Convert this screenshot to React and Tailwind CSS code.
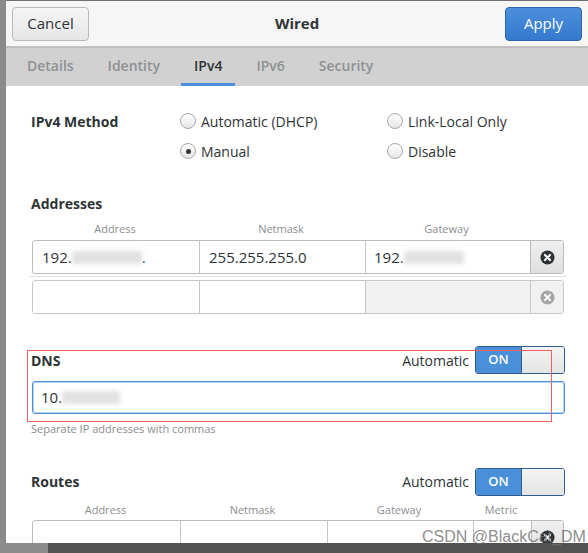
const font = { fontFamily: '"Open Sans", "DejaVu Sans", sans-serif' };

function XCircle({ dim }) {
  return (
    <svg width="15" height="15" viewBox="0 0 16 16">
      <circle cx="8" cy="8" r="7.5" fill={dim ? "#a4a6a7" : "#2e3436"} />
      <path d="M5.3 5.3 L10.7 10.7 M10.7 5.3 L5.3 10.7" stroke="#fff" strokeWidth="2.2" strokeLinecap="round" />
    </svg>
  );
}

function Radio({ checked, label }) {
  return (
    <div className="flex items-center gap-[5px] text-[14px] text-[#2e3436]">
      <span className="w-[16px] h-[16px] rounded-full border border-[#a8a8a8] bg-gradient-to-b from-[#ffffff] to-[#e6e6e6] flex items-center justify-center">
        {checked && <span className="w-[5px] h-[5px] rounded-full bg-[#2e3436]" />}
      </span>
      <span>{label}</span>
    </div>
  );
}

function Switch() {
  return (
    <div className="flex w-[90px] h-[28px] rounded-[3px] border border-[#2f5d8f] overflow-hidden">
      <div className="w-[45px] bg-[#4a90d9] text-white text-[13px] font-semibold flex items-center justify-center">ON</div>
      <div className="flex-1 bg-gradient-to-b from-[#f4f4f4] to-[#e4e4e4] border-l border-[#2f5d8f]" />
    </div>
  );
}

function Blur({ w }) {
  return <span className="inline-block h-[13px] bg-[#e2e2e2] blur-[2px] align-middle" style={{ width: w }} />;
}

export default function App() {
  return (
    <div className="w-[588px] h-[553px] overflow-hidden relative flex flex-col bg-[#525252]" style={font}>
      <div className="flex h-[543px]">
        <div className="w-[6px] bg-[#8a8a8a]" />
        <div className="flex-1 flex flex-col bg-white border-t border-[#707070] overflow-hidden">
          {/* header */}
          <div className="h-[46px] bg-[#f6f6f6] border-b border-[#c4c4c4] flex items-center justify-between px-[6px] shrink-0">
            <button className="w-[77px] h-[34px] rounded-[4px] border border-[#b9b9b9] bg-gradient-to-b from-[#f6f6f6] to-[#e6e6e6] text-[15px] text-[#2e3436]">Cancel</button>
            <div className="text-[15px] font-bold text-[#2e3436]">Wired</div>
            <button className="w-[77px] h-[34px] rounded-[4px] border border-[#2a67ad] bg-gradient-to-b from-[#4b8fdc] to-[#3479cc] text-[15px] text-white">Apply</button>
          </div>
          {/* tabs */}
          <div className="h-[39px] bg-[#d1d1d1] border-t border-[#bdbdbd] flex items-stretch pl-[4px] shrink-0">
            {["Details", "Identity", "IPv4", "IPv6", "Security"].map((t) => (
              <div key={t} className={"px-[13px] mx-[4px] flex items-center text-[14px] font-semibold border-b-[3px] " + (t === "IPv4" ? "text-[#2e3436] border-[#4a90d9]" : "text-[#8e9192] border-transparent")}>
                {t}
              </div>
            ))}
          </div>
          {/* content */}
          <div className="flex-1 flex flex-col pl-[25px] pr-[23px] pt-[20px]">
            <div className="flex">
              <div className="w-[149px] h-[30px] flex items-center text-[14px] font-bold text-[#2e3436]">IPv4 Method</div>
              <div className="grid grid-cols-[207px_1fr]">
                <div className="h-[30px] flex items-center"><Radio label="Automatic (DHCP)" /></div>
                <div className="h-[30px] flex items-center"><Radio label="Link-Local Only" /></div>
                <div className="h-[30px] flex items-center"><Radio checked label="Manual" /></div>
                <div className="h-[30px] flex items-center"><Radio label="Disable" /></div>
              </div>
            </div>

            <div className="mt-[27px] h-[20px] flex items-center text-[14px] font-bold text-[#2e3436]">Addresses</div>
            <div className="mt-[8px] h-[19px] grid grid-cols-[166px_166px_165px_34px] text-[11px] text-[#8b8e8f] pl-px">
              <div className="text-center">Address</div>
              <div className="text-center">Netmask</div>
              <div className="text-center">Gateway</div>
              <div />
            </div>
            <div className="h-[34px] w-[532px] ml-px grid grid-cols-[166px_166px_165px_1fr] border border-[#bcbcbc] rounded-[3px] overflow-hidden text-[15px] text-[#2e3436]">
              <div className="flex items-center pl-[9px] whitespace-nowrap">192.<Blur w={70} />.</div>
              <div className="flex items-center pl-[9px] border-l border-[#c4c4c4]">255.255.255.0</div>
              <div className="flex items-center pl-[8px] border-l border-[#c4c4c4] whitespace-nowrap">192.<Blur w={60} /></div>
              <div className="flex items-center justify-center border-l border-[#bcbcbc] bg-gradient-to-b from-[#f0f0f0] to-[#dfdfdf]"><XCircle /></div>
            </div>
            <div className="h-px bg-[#e0e0e0] mt-[2px] mb-[3px] -mx-[2px]" />
            <div className="h-[34px] w-[532px] ml-px grid grid-cols-[166px_166px_165px_1fr] border border-[#c8c8c8] rounded-[3px] overflow-hidden">
              <div className="bg-white" />
              <div className="bg-white border-l border-[#c4c4c4]" />
              <div className="bg-[#f1f1f1] border-l border-[#c4c4c4]" />
              <div className="flex items-center justify-center border-l border-[#c8c8c8] bg-[#f1f1f1]"><XCircle dim /></div>
            </div>

            <div className="mt-[32px] h-[28px] flex items-center">
              <div className="flex-1 text-[14px] font-bold text-[#2e3436]">DNS</div>
              <div className="text-[14px] text-[#2e3436] mr-[6px]">Automatic</div>
              <Switch />
            </div>
            <div className="mt-[7px] h-[33px] ml-px border border-[#4a90d9] rounded-[3px] shadow-[inset_0_0_0_1px_#b8d3f0] flex items-center pl-[8px] text-[15px] text-[#2e3436]">
              10.<Blur w={58} />
            </div>
            <div className="mt-[8px] h-[14px] flex items-center text-[11px] text-[#8b8e8f]">Separate IP addresses with commas</div>

            <div className="mt-[31px] h-[29px] flex items-center">
              <div className="flex-1 text-[14px] font-bold text-[#2e3436]">Routes</div>
              <div className="text-[14px] text-[#2e3436] mr-[6px]">Automatic</div>
              <Switch />
            </div>
            <div className="mt-[6px] h-[14px] grid grid-cols-[147px_147px_146px_58px] text-[11px] text-[#8b8e8f] pl-px items-center">
              <div className="text-center">Address</div>
              <div className="text-center">Netmask</div>
              <div className="text-center">Gateway</div>
              <div className="text-center">Metric</div>
            </div>
            <div className="mt-[4px] h-[34px] w-[532px] ml-px grid grid-cols-[147px_147px_146px_58px_1fr] border border-[#bcbcbc] rounded-[3px] overflow-hidden">
              <div />
              <div className="border-l border-[#c4c4c4]" />
              <div className="border-l border-[#c4c4c4]" />
              <div className="border-l border-[#c4c4c4]" />
              <div className="border-l border-[#bcbcbc] bg-gradient-to-b from-[#f0f0f0] to-[#dfdfdf] flex items-center justify-center"><XCircle /></div>
            </div>
          </div>
          <div className="h-px border-t border-dashed border-[#a0a0a0] shrink-0" />
        </div>
      </div>
      <div className="flex flex-1">
        <div className="w-[48px] bg-[#8c8c8c]" />
        <div className="flex-1 bg-[#525252]" />
      </div>

      {/* red highlight annotation */}
      <div className="absolute left-[27px] top-[350px] w-[525px] h-[72px] border border-[#f06060] pointer-events-none" />
      {/* watermark */}
      <div className="absolute left-[422px] top-[525px] text-[16px] text-[#6f6f6f]/80 whitespace-nowrap" style={{ fontFamily: '"Liberation Sans", sans-serif' }}>CSDN @BlackCat_DM</div>
    </div>
  );
}
